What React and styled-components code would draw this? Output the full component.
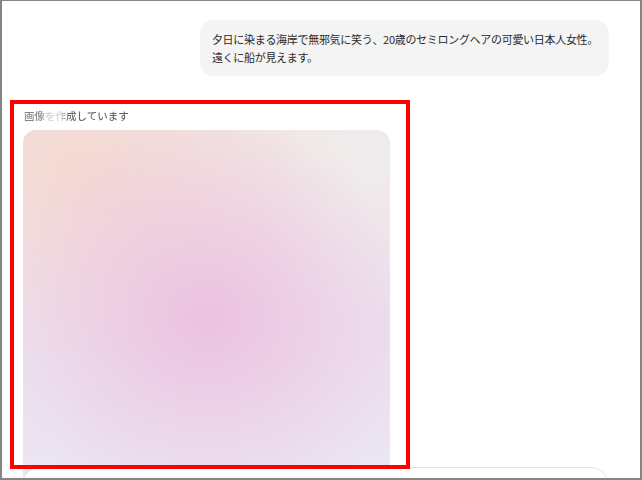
import React from 'react';
import styled, { createGlobalStyle } from 'styled-components';

const GlobalStyle = createGlobalStyle`
  html, body {
    margin: 0;
    padding: 0;
    background: #ffffff;
  }
  body {
    font-family: "Noto Sans CJK JP", "Noto Sans", sans-serif;
  }
`;

const Frame = styled.div`
  position: relative;
  box-sizing: border-box;
  width: 642px;
  height: 480px;
  overflow: hidden;
  border: 2px solid #858585;
  border-top-width: 1px;
  background: #ffffff;
`;

const Thread = styled.div`
  display: flex;
  flex-direction: column;
  padding: 19px 31px 0 21px;
`;

const UserRow = styled.div`
  display: flex;
  justify-content: flex-end;
`;

const Bubble = styled.div`
  background: #f4f4f4;
  border-radius: 13px;
  padding: 10px 11px 10px 12px;
  font-size: 11px;
  line-height: 18px;
  letter-spacing: -0.3px;
  color: #2a2a2a;
`;

const Reply = styled.div`
  display: flex;
  flex-direction: column;
  margin-top: 33px;
  gap: 7px;
`;

const Status = styled.div`
  font-size: 10.5px;
  line-height: 14px;
  font-weight: 500;
  padding-left: 1px;
  background: linear-gradient(90deg, #858585 0px, #858585 17px, #d2d2d2 25px, #d2d2d2 38px, #6a6a6a 46px, #5f5f5f 120px);
  -webkit-background-clip: text;
  background-clip: text;
  color: transparent;
  width: max-content;
`;

const Placeholder = styled.div`
  width: 367px;
  height: 360px;
  border-radius: 13px;
  background:
    radial-gradient(ellipse 60% 55% at 50% 52%, rgba(236, 192, 224, 0.95), rgba(236, 192, 224, 0) 100%),
    radial-gradient(ellipse 75% 55% at 15% 10%, rgba(244, 216, 208, 0.95), rgba(244, 216, 208, 0) 100%),
    radial-gradient(ellipse 60% 45% at 85% 5%, rgba(240, 236, 236, 1), rgba(240, 236, 236, 0) 100%),
    linear-gradient(180deg, #f0e6ea 0%, #ece2ee 60%, #ebe6f2 100%);
`;

const Composer = styled.div`
  position: absolute;
  left: 20px;
  right: 31px;
  top: 466px;
  height: 60px;
  background: #ffffff;
  border: 1px solid #e4e4e4;
  border-radius: 18px;
`;

const Highlight = styled.div`
  position: absolute;
  left: 8px;
  top: 99px;
  width: 400px;
  height: 369px;
  box-sizing: border-box;
  border: 4px solid #ff0000;
  pointer-events: none;
`;

export default function App() {
  return (
    <>
      <GlobalStyle />
      <Frame>
        <Thread>
          <UserRow>
            <Bubble>
              夕日に染まる海岸で無邪気に笑う、20歳のセミロングヘアの可愛い日本人女性。
              <br />
              遠くに船が見えます。
            </Bubble>
          </UserRow>
          <Reply>
            <Status>画像を作成しています</Status>
            <Placeholder />
          </Reply>
        </Thread>
        <Composer />
        <Highlight />
      </Frame>
    </>
  );
}
